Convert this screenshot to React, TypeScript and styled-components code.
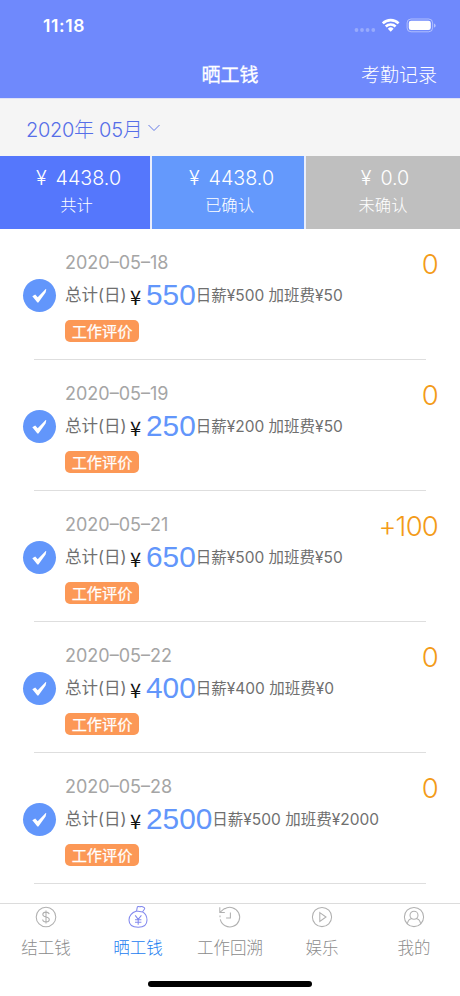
import React from 'react';
import styled, { createGlobalStyle } from 'styled-components';

const Global = createGlobalStyle`
  * { box-sizing: border-box; }
  html, body { margin: 0; padding: 0; background: #fff; }
  body { font-family: Inter, "Noto Sans CJK SC", sans-serif; overflow: hidden; }
  svg { display: block; }
`;

const Screen = styled.div`
  width: 460px;
  height: 996px;
  display: flex;
  flex-direction: column;
  background: #fff;
  white-space: nowrap;
`;

const Header = styled.header`
  height: 98px;
  flex: none;
  background: #6f89fc;
  color: #fff;
`;

const StatusBar = styled.div`
  height: 50px;
  padding: 0 24px 0 43px;
  display: flex;
  align-items: center;
  justify-content: space-between;
`;

const Clock = styled.span`
  font-size: 17.5px;
  font-weight: 600;
  letter-spacing: 0.6px;
  line-height: 20px;
  padding-top: 2px;
`;

const NavBar = styled.div`
  height: 48px;
  display: grid;
  grid-template-columns: 1fr auto 1fr;
  align-items: center;
  padding: 3px 23px 0;
`;

const Title = styled.h1`
  grid-column: 2;
  margin: 0;
  font-size: 19px;
  font-weight: 400;
  -webkit-text-stroke: 0.3px currentColor;
  line-height: 28px;
`;

const NavLink = styled.span`
  justify-self: end;
  font-size: 19px;
  font-weight: 300;
  line-height: 28px;
`;

const MonthBar = styled.div`
  height: 58px;
  flex: none;
  display: flex;
  align-items: center;
  gap: 6px;
  padding: 1px 0 0 26px;
  background: #f5f5f5;
  border-top: 1px solid #dfe2f6;
  color: #566ee8;
  font-size: 20px;
  font-weight: 300;
  letter-spacing: -0.3px;
`;

const Totals = styled.section`
  height: 73px;
  flex: none;
  display: grid;
  grid-template-columns: 150px 152px 154px;
  column-gap: 2px;
  background: #e9eefc;
`;

const Total = styled.div<{ $bg: string; $shift: number }>`
  background: ${(p) => p.$bg};
  color: #fff;
  display: flex;
  flex-direction: column;
  align-items: center;
  padding: 9px 0 0 ${(p) => p.$shift}px;
  font-weight: 300;
`;

const TotalValue = styled.span`
  height: 27px;
  line-height: 27px;
  font-size: 19.7px;
  padding-left: 4px;
  display: flex;
  gap: 9px;
`;

const TotalLabel = styled.span`
  height: 27px;
  line-height: 27px;
  font-size: 16.3px;
`;

const List = styled.main`
  height: 674px;
  flex: none;
`;

const Row = styled.article`
  height: 131px;
  display: grid;
  grid-template-columns: 42px 1fr;
  padding: 20px 22px 0 23px;
  background: linear-gradient(#dedede, #dedede) 34px 130px / 392px 1px no-repeat;
`;

const CheckMark = styled.div`
  width: 33px;
  height: 33px;
  margin-top: 29.5px;
  border-radius: 50%;
  background: #6296fb;
`;

const Details = styled.div`
  display: flex;
  flex-direction: column;
  align-items: flex-start;
`;

const DateLine = styled.div`
  width: 100%;
  height: 27px;
  display: flex;
  justify-content: space-between;
  line-height: 27px;
  color: #a5a5a5;
  font-size: 18px;
`;

const Bonus = styled.span`
  color: #f39b18;
  font-size: 27.5px;
  font-weight: 300;
  letter-spacing: -0.8px;
  line-height: 31px;
`;

const SumLine = styled.div`
  height: 38px;
  display: flex;
  align-items: center;
  color: #6f6f6f;
`;

const SumLabel = styled.span`
  width: 64px;
  font-size: 16.5px;
  line-height: 24px;
`;

const Yen = styled.span`
  width: 17px;
  padding: 3px 0 0 1px;
  color: #111;
  font-family: "Noto Sans CJK SC", sans-serif;
  font-size: 20px;
  line-height: 24px;
`;

const Amount = styled.span`
  color: #6296fb;
  font-family: "Liberation Sans", sans-serif;
  font-size: 29.8px;
`;

const Breakdown = styled.span`
  font-size: 15.5px;
  line-height: 24px;
  padding-top: 1px;
`;

const Tag = styled.span`
  width: 74px;
  height: 22px;
  margin-top: 5.5px;
  border-radius: 5px;
  background: #fc9856;
  color: #fff;
  font-size: 15.2px;
  -webkit-text-stroke: 0.25px currentColor;
  line-height: 23px;
  text-align: center;
`;

const TabBar = styled.nav`
  height: 61px;
  flex: none;
  border-top: 1px solid #dcdcdc;
  display: grid;
  grid-template-columns: repeat(5, 1fr);
`;

const Tab = styled.div<{ $active?: boolean }>`
  display: flex;
  flex-direction: column;
  align-items: center;
  color: ${(p) => (p.$active ? '#1c80f0' : '#8c8c8c')};
  font-size: 16.5px;
  font-weight: 300;
  line-height: 24px;
  svg { color: ${(p) => (p.$active ? '#8389ee' : '#b0b0b0')}; margin: 1px 0 7px; }
`;

const HomeArea = styled.footer`
  flex: 1;
  display: flex;
  justify-content: center;
  padding-top: 17px;
`;

const HomeIndicator = styled.div`
  width: 164px;
  height: 6px;
  border-radius: 3px;
  background: #000;
`;

const StatusIcons = () => (
  <svg width="84" height="20" viewBox="352 15 84 20">
    <g fill="#fff" opacity="0.28">
      <circle cx="356.5" cy="30" r="1.9" />
      <circle cx="362" cy="30" r="1.9" />
      <circle cx="367.6" cy="30" r="1.9" />
      <circle cx="373.3" cy="30" r="1.9" />
    </g>
    <g fill="none" stroke="#fff" strokeWidth="2.6">
      <path d="M382.8 23.4a11.2 11.2 0 0 1 15.8 0" />
      <path d="M385.8 26.5a7 7 0 0 1 9.8 0" />
    </g>
    <path d="M387.8 28.7a4.1 4.1 0 0 1 5.8 0l-2.9 3z" fill="#fff" />
    <rect x="407.1" y="19" width="25.5" height="12.8" rx="3.9" fill="none" stroke="#fff" strokeOpacity="0.45" />
    <rect x="408.8" y="20.8" width="22" height="9.2" rx="2.3" fill="#fff" />
    <path d="M434 23.4c2.2.8 2.2 3.4 0 4.2z" fill="#fff" opacity="0.5" />
  </svg>
);

const Chevron = () => (
  <svg width="12" height="8" viewBox="0 0 12 8" fill="none" stroke="#6278e6" strokeWidth="1">
    <path d="M.5 1 6 6.5 11.5 1" />
  </svg>
);

const Tick = () => (
  <svg width="33" height="33" viewBox="0 0 33 33" fill="#fff">
    <path d="M9.3 17.3 12.2 15.6l2.5 2.6 8-8.2.6.3-.7 3.3-7.2 9.8-1 .2z" />
  </svg>
);

type IconName = 'coin' | 'bag' | 'history' | 'play' | 'user';

const iconShapes: Record<IconName, React.ReactNode> = {
  coin: (
    <>
      <circle cx="12" cy="12" r="9.8" />
      <path d="M12 5.5v13M15.2 9.2c-.3-1.4-1.6-2.1-3.2-2.1s-3.2.8-3.2 2.4c0 3.5 6.5 1.5 6.5 5 0 1.6-1.5 2.4-3.3 2.4s-3.2-.9-3.4-2.4" />
    </>
  ),
  bag: (
    <>
      <path d="M10.6 6 11.2 2.4c.1-.8.8-1 1.6-.9 1.4.6 2.6-.4 3.9.3.8.5 2 .4 2 1.4 0 1.3-1.5 2.3-2 3.6M10.6 6l6 .9M10.6 6C5.9 7.6 3 10.4 3 15.1c0 5 3.3 7.2 9.2 7.2s8.8-2.4 8.8-7.2c0-3.7-1.5-6.4-4.4-8.2" />
      <path d="m9.2 10.4 3 4 3.2-4M12.2 14.4v5.4M9 14.8h6.4M9 17.2h6.4" />
    </>
  ),
  history: (
    <>
      <path d="M1.8 2.2v5.2h5M1.9 7.4 6.6 3.4M6.4 4A9.8 9.8 0 1 1 2.3 14.4M2 10.6v1.6" />
      <path d="M12.4 7.4v5.5H8.1" />
    </>
  ),
  play: (
    <>
      <circle cx="12" cy="12" r="9.6" />
      <path d="m9.8 7.6 6.2 4.4-6.2 4.4z" />
    </>
  ),
  user: (
    <>
      <circle cx="12" cy="12" r="9.6" />
      <circle cx="12" cy="10.3" r="4" />
      <path d="M5.3 18.8c.7-3 2.5-5 4.8-5.2M18.7 18.8c-.7-3-2.5-5-4.8-5.2" />
    </>
  ),
};

const TabIcon = ({ name }: { name: IconName }) => (
  <svg width="24" height="24" viewBox="0 0 24 24" fill="none" stroke="currentColor" strokeWidth="1.05">
    {iconShapes[name]}
  </svg>
);

const totals = [
  { value: '4438.0', label: '共计', bg: '#5577fc', shift: 3 },
  { value: '4438.0', label: '已确认', bg: '#6499fc', shift: 3 },
  { value: '0.0', label: '未确认', bg: '#bfbfbf', shift: 0 },
];

const records = [
  { date: '2020–05–18', amount: '550', detail: '日薪¥500 加班费¥50', bonus: '0' },
  { date: '2020–05–19', amount: '250', detail: '日薪¥200 加班费¥50', bonus: '0' },
  { date: '2020–05–21', amount: '650', detail: '日薪¥500 加班费¥50', bonus: '+100' },
  { date: '2020–05–22', amount: '400', detail: '日薪¥400 加班费¥0', bonus: '0' },
  { date: '2020–05–28', amount: '2500', detail: '日薪¥500 加班费¥2000', bonus: '0' },
];

const tabs: { icon: IconName; label: string; active?: boolean }[] = [
  { icon: 'coin', label: '结工钱' },
  { icon: 'bag', label: '晒工钱', active: true },
  { icon: 'history', label: '工作回溯' },
  { icon: 'play', label: '娱乐' },
  { icon: 'user', label: '我的' },
];

export default function App() {
  return (
    <Screen>
      <Global />
      <Header>
        <StatusBar>
          <Clock>11:18</Clock>
          <StatusIcons />
        </StatusBar>
        <NavBar>
          <Title>晒工钱</Title>
          <NavLink>考勤记录</NavLink>
        </NavBar>
      </Header>
      <MonthBar>
        2020年 05月
        <Chevron />
      </MonthBar>
      <Totals>
        {totals.map((t) => (
          <Total key={t.label} $bg={t.bg} $shift={t.shift}>
            <TotalValue>
              <span>¥</span>
              <span>{t.value}</span>
            </TotalValue>
            <TotalLabel>{t.label}</TotalLabel>
          </Total>
        ))}
      </Totals>
      <List>
        {records.map((r) => (
          <Row key={r.date}>
            <CheckMark>
              <Tick />
            </CheckMark>
            <Details>
              <DateLine>
                <span>{r.date}</span>
                <Bonus>{r.bonus}</Bonus>
              </DateLine>
              <SumLine>
                <SumLabel>总计(日)</SumLabel>
                <Yen>¥</Yen>
                <Amount>{r.amount}</Amount>
                <Breakdown>{r.detail}</Breakdown>
              </SumLine>
              <Tag>工作评价</Tag>
            </Details>
          </Row>
        ))}
      </List>
      <TabBar>
        {tabs.map((t) => (
          <Tab key={t.label} $active={t.active}>
            <TabIcon name={t.icon} />
            {t.label}
          </Tab>
        ))}
      </TabBar>
      <HomeArea>
        <HomeIndicator />
      </HomeArea>
    </Screen>
  );
}
